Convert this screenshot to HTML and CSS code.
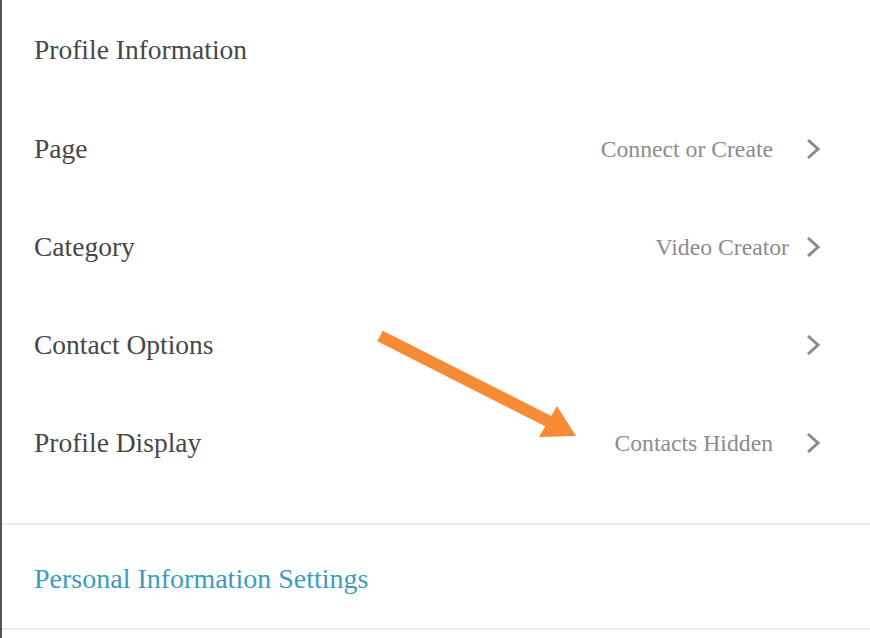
FILE: index.html
```html
<!DOCTYPE html>
<html lang="en">
<head>
    <meta charset="UTF-8">
    <title>Profile Information</title>
    <link rel="stylesheet" href="styles.css">
</head>
<body>
    <div class="panel">
        <div class="row">
            <span class="label">Profile Information</span>
        </div>
        <div class="row">
            <span class="label">Page</span>
            <span class="value">Connect or Create</span>
            <span class="chev"><svg width="14" height="22" viewBox="0 0 14 22"><path d="M2 2 L12 11 L2 20" fill="none" stroke="#8a8a8a" stroke-width="3"/></svg></span>
        </div>
        <div class="row">
            <span class="label">Category</span>
            <span class="value tight">Video Creator</span>
            <span class="chev"><svg width="14" height="22" viewBox="0 0 14 22"><path d="M2 2 L12 11 L2 20" fill="none" stroke="#8a8a8a" stroke-width="3"/></svg></span>
        </div>
        <div class="row">
            <span class="label">Contact Options</span>
            <span class="chev"><svg width="14" height="22" viewBox="0 0 14 22"><path d="M2 2 L12 11 L2 20" fill="none" stroke="#8a8a8a" stroke-width="3"/></svg></span>
        </div>
        <div class="row">
            <span class="label">Profile Display</span>
            <span class="value">Contacts Hidden</span>
            <span class="chev"><svg width="14" height="22" viewBox="0 0 14 22"><path d="M2 2 L12 11 L2 20" fill="none" stroke="#8a8a8a" stroke-width="3"/></svg></span>
        </div>
        <div class="spacer"></div>
        <div class="link-row">
            <a class="link" href="#">Personal Information Settings</a>
        </div>
        <div class="bottom"></div>

        <!-- annotation arrow -->
        <svg class="arrow" width="870" height="638" viewBox="0 0 870 638">
            <line x1="380" y1="336" x2="552" y2="423" stroke="#f68b35" stroke-width="12"/>
            <polygon points="576,436 539,437 557,406" fill="#f68b35"/>
        </svg>
    </div>
</body>
</html>
```

FILE: styles.css
```css
body {
    margin: 0;
    font-family: "Liberation Serif", "DejaVu Serif", serif;
    background: #fff;
}
.panel {
    position: relative;
    height: 638px;
    border-left: 2px solid #555;
    overflow: hidden;
}
.row {
    display: flex;
    align-items: center;
    height: 98px;
    padding: 0 50px 0 32px;
}
.row:first-child {
    height: 100px;
}
.label {
    flex: 1;
    font-size: 27.5px;
    color: #474747;
}
.value {
    font-size: 23.7px;
    color: #8c8c8c;
    margin-right: 33px;
}
.value.tight {
    margin-right: 17px;
}
.chev {
    display: flex;
}
.spacer {
    height: 31px;
    border-bottom: 2px solid #ececec;
}
.link-row {
    display: flex;
    align-items: center;
    box-sizing: border-box;
    height: 103px;
    padding: 4px 0 0 32px;
}
.link {
    font-size: 28px;
    color: #3b9cc2;
    text-decoration: none;
}
.bottom {
    border-top: 2px solid #ececec;
}
.arrow {
    position: absolute;
    left: -2px;
    top: 0;
    pointer-events: none;
}
```
